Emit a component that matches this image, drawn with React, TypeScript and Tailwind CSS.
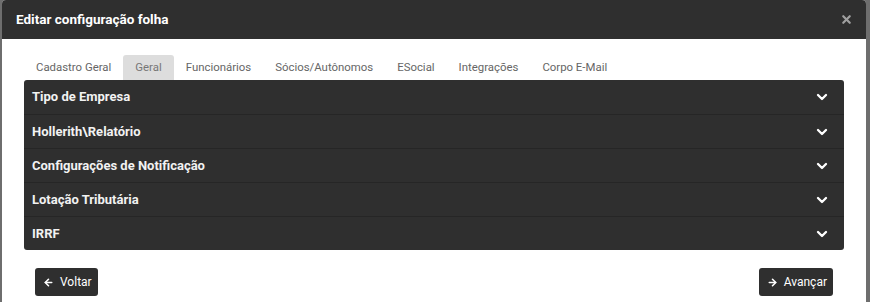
import React, { useState } from 'react';
import { ChevronDown, ArrowLeft, ArrowRight, X } from 'lucide-react';

const tabs = ['Cadastro Geral', 'Geral', 'Funcionários', 'Sócios/Autônomos', 'ESocial', 'Integrações', 'Corpo E-Mail'];
const sections = ['Tipo de Empresa', 'Hollerith\\Relatório', 'Configurações de Notificação', 'Lotação Tributária', 'IRRF'];

export default function App() {
  const [activeTab, setActiveTab] = useState('Geral');

  return (
    <div className="w-[870px] h-[302px] bg-[#6e6e6e] overflow-hidden font-['Roboto',sans-serif]">
      <div className="ml-[2px] w-[864px] h-[302px] bg-white rounded-t-[4px] overflow-hidden">
        <div className="h-[39px] bg-[#2f2f2f] flex items-center justify-between pl-[14px] pr-[13px]">
          <h1 className="text-[13.5px] font-bold text-white">Editar configuração folha</h1>
          <X size={13} strokeWidth={4} className="text-[#a0a0a0]" />
        </div>

        <div className="px-[22px] pt-[16px]">
          <div className="flex h-[25px] items-end">
            {tabs.map((t) => (
              <button
                key={t}
                onClick={() => setActiveTab(t)}
                className={`h-[25px] px-3 text-[11.4px] rounded-t-[3px] ${activeTab === t ? 'bg-[#dddddd] text-[#777]' : 'text-[#666]'}`}
              >
                {t}
              </button>
            ))}
          </div>

          <div className="bg-[#2f2f2f] rounded-[3px]">
            {sections.map((s, i) => (
              <div
                key={s}
                className={`h-[34px] flex items-center justify-between pl-[8px] pr-[14px] ${i > 0 ? 'border-t border-[#262626]' : ''}`}
              >
                <span className="text-[13px] font-bold text-[#f2f2f2]">{s}</span>
                <ChevronDown size={16} strokeWidth={3.5} className="text-white" />
              </div>
            ))}
          </div>

          <div className="flex justify-between pt-[18px] px-[11px]">
            <button className="h-[28px] pl-[8px] pr-[6px] bg-[#2f2f2f] rounded-[3px] flex items-center gap-[6px] text-white text-[12px]">
              <ArrowLeft size={11} strokeWidth={3.5} />
              Voltar
            </button>
            <button className="h-[28px] pl-[8px] pr-[6px] bg-[#2f2f2f] rounded-[3px] flex items-center gap-[6px] text-white text-[12px]">
              <ArrowRight size={11} strokeWidth={3.5} />
              Avançar
            </button>
          </div>
        </div>
      </div>
    </div>
  );
}
